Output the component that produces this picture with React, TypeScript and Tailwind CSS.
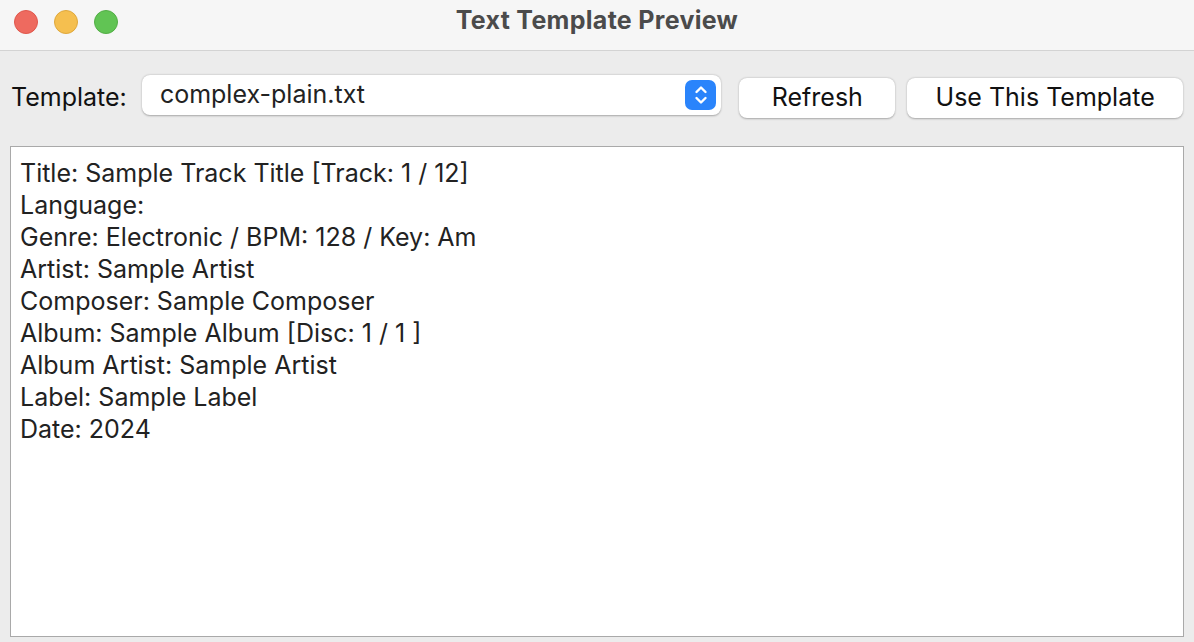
import React from "react";

const lines = [
  "Title: Sample Track Title [Track: 1 / 12]",
  "Language:",
  "Genre: Electronic / BPM: 128 / Key: Am",
  "Artist: Sample Artist",
  "Composer: Sample Composer",
  "Album: Sample Album [Disc: 1 / 1 ]",
  "Album Artist: Sample Artist",
  "Label: Sample Label",
  "Date: 2024",
];

function Stepper() {
  return (
    <span className="flex h-[30px] w-[31px] items-center justify-center rounded-[7px] bg-[#2a84fb]">
      <svg width="14" height="20" viewBox="0 0 14 20" fill="none" stroke="white" strokeWidth="2.4" strokeLinecap="round" strokeLinejoin="round">
        <path d="M2.5 7 L7 2.5 L11.5 7" />
        <path d="M2.5 13 L7 17.5 L11.5 13" />
      </svg>
    </span>
  );
}

export default function App() {
  return (
    <div
      className="flex h-[642px] w-[1194px] flex-col overflow-hidden bg-[#ececec] text-[#1d1d1d]"
      style={{ fontFamily: "Inter, 'Noto Sans', sans-serif" }}
    >
      {/* title bar */}
      <div className="relative flex h-[51px] shrink-0 justify-center border-b border-[#d3d3d3] bg-[#f6f6f6] pt-[5px]">
        <div className="absolute left-[14px] top-[10px] flex gap-4">
          <span className="h-6 w-6 rounded-full border border-[#e0574c] bg-[#ee6a5f]" />
          <span className="h-6 w-6 rounded-full border border-[#dfa83c] bg-[#f5bf4f]" />
          <span className="h-6 w-6 rounded-full border border-[#53ae46] bg-[#61c454]" />
        </div>
        <span className="text-[25px] font-bold leading-[30px] tracking-[0.3px] text-[#4b4b4b]">Text Template Preview</span>
      </div>

      {/* toolbar */}
      <div className="flex items-start px-[11px] pt-[24px]">
        <span className="mt-[2px] h-[40px] w-[131px] text-[25px] leading-[40px] text-[#111]">Template:</span>
        <div className="flex h-[40px] w-[580px] items-center justify-between rounded-[8px] bg-white pl-[18px] pr-[5px] shadow-[0_0.5px_2px_rgba(0,0,0,0.3)]">
          <span className="text-[25px] text-[#222]">complex-plain.txt</span>
          <Stepper />
        </div>
        <button className="ml-[18px] mt-[3px] h-[40px] w-[156px] rounded-[8px] bg-white text-[25px] text-[#111] shadow-[0_0.5px_2px_rgba(0,0,0,0.3)]">
          Refresh
        </button>
        <button className="ml-[12px] mt-[3px] h-[40px] w-[276px] rounded-[8px] bg-white text-[25px] text-[#111] shadow-[0_0.5px_2px_rgba(0,0,0,0.3)]">
          Use This Template
        </button>
      </div>

      {/* text area */}
      <div className="mx-[10px] mb-[5px] mt-[28px] flex-1 border border-[#a9a9a9] bg-white px-[9px] pt-[10px]">
        {lines.map((l) => (
          <div key={l} className="h-[32px] text-[25px] leading-[32px] text-[#222]">
            {l}
          </div>
        ))}
      </div>
    </div>
  );
}
